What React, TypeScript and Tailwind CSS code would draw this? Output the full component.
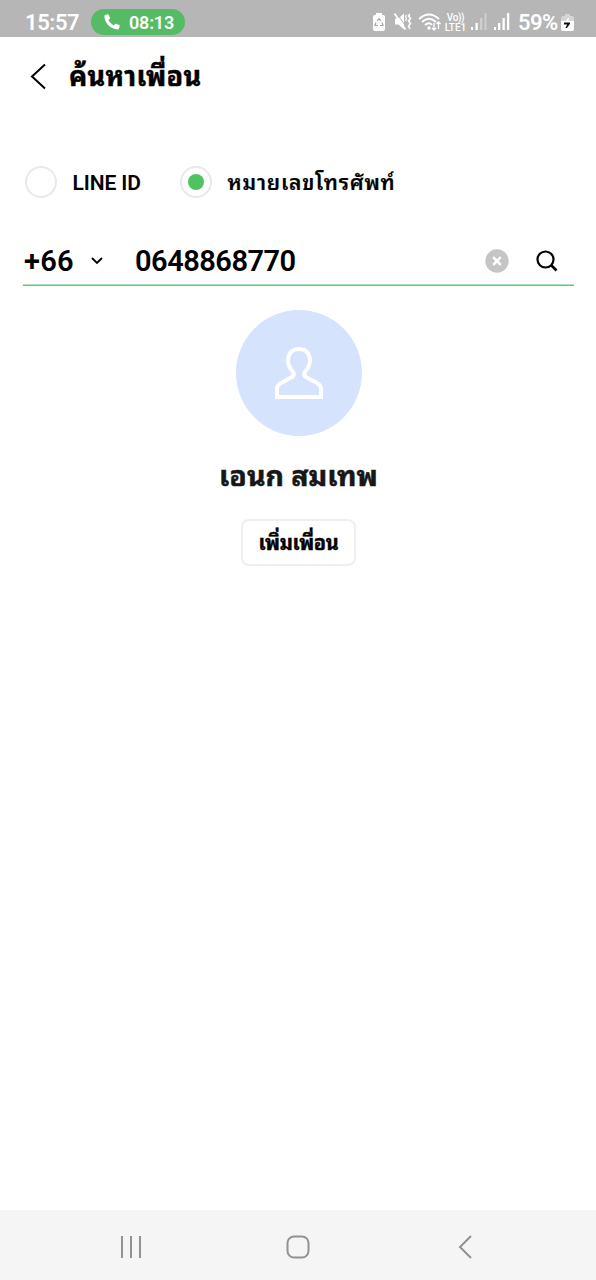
import type { ReactNode } from 'react';

function StatusBar() {
  return (
    <header className="flex h-[37px] items-center bg-[#b6b6b6] pt-[7px] text-white">
      <span className="ml-[25px] w-[54px] whitespace-nowrap pt-px text-[22px] leading-[30px] font-semibold tracking-[-0.4px]">15:57</span>
      <div className="ml-3 flex h-[26px] w-[94px] items-center rounded-full bg-[#55bb64]">
        <svg className="ml-[13px] h-4 w-4" viewBox="0 0 16 16" fill="currentColor">
          <path d="M1.200 1 3.600.200c.500-.100.900.100 1.100.600l1.200 3c.200.400.100.800-.200 1.100L4.400 6.100c1 2.200 3 4.200 5.500 5.300l1.200-1.400c.300-.300.700-.400 1.100-.200l3 1.300c.500.200.700.600.500 1.100l-.700 2.400c-.100.500-.500.800-1 .800C6.500 15.400.400 9 .400 2.100c0-.500.300-1 .800-1.100Z" />
        </svg>
        <span className="ml-[9px] whitespace-nowrap pt-0.5 text-[18px] leading-6 font-semibold tracking-[-0.2px]">08:13</span>
      </div>
      <StatusIcons />
      <span className="ml-2 w-[40px] whitespace-nowrap pt-px text-[22px] leading-[30px] font-semibold tracking-[-0.6px]">59%</span>
      <svg className="ml-[3px] h-5 w-[13px]" viewBox="0 0 13 20">
        <path d="M4 2h5v2h2q2 0 2 2v3H0V6q0-2 2-2h2Z" fill="#d5d5d5" />
        <path d="M0 9h13v8q0 2-2 2H2q-2 0-2-2Z" fill="#fff" />
        <path d="M7.500 5.500 4 10h4Z" fill="#fff" />
        <path d="M3 10.500h6v1.300L6 16H4.500l1.600-3.500H3Z" fill="#111" />
      </svg>
    </header>
  );
}

function StatusIcons() {
  return (
    <div className="ml-[187px] flex h-[26px] items-center">
      <svg className="h-[26px] w-[69px]" viewBox="0 0 69 26" fill="none" stroke="#fff">
        <path d="M4 4h6v2h1q2 0 2 2v12q0 2-2 2H3q-2 0-2-2V8q0-2 2-2h1Z" fill="#fff" stroke="none" />
        <path d="m5 12 2-2.500L9 12M10 13.500l1 3H8M6 16.500H3l1-3" stroke="#a5a5a5" strokeWidth="1.200" />
        <path d="M23 9.500h3.500l5.500-5v16l-5.500-5H23Z" fill="#fff" stroke="none" />
        <path d="m24.500 4 10.500 15" stroke="#b6b6b6" strokeWidth="1" />
        <path d="m22.500 4.500 11 16" strokeWidth="2" />
        <path d="M38 5 36.500 7l2 2.500-2 2.500 2 2.500-2 2.500 1.500 3" strokeWidth="1.600" />
        <path d="m34.500 6-1 1.500 1 2-1 2.500" strokeWidth="1.200" />
        <path d="M47 10q10-9 20 0M50 13q7-6.500 14 0M53 16q4-3.500 7 0" strokeWidth="1.800" />
        <circle cx="57" cy="19" r="1.700" fill="#fff" stroke="none" />
        <path d="M62 14v7m-2-2 2 2 2-2M66.500 20v-7m-2 2 2-2 2 2" strokeWidth="1.300" />
      </svg>
      <span className="ml-[3px] flex w-[23px] flex-col items-center whitespace-nowrap font-medium">
        <span className="text-[10px] leading-[11px] tracking-[-0.4px]">Vo))</span>
        <span className="text-[10px] leading-[10px]">LTE1</span>
      </span>
      <svg className="ml-[4px] h-[26px] w-[39px]" viewBox="0 0 39 26" fill="#fff">
        <path d="M0 18h2v3H0zM4.500 14h2.300v7H4.500z" />
        <path d="M9 9h2.300v12H9zM13.500 4h2v17h-2z" opacity=".35" />
        <path d="M23 18h2v3h-2zM27 14h2.300v7H27zM31.500 9h2.300v12h-2.300zM36 4h2.300v17H36z" />
      </svg>
    </div>
  );
}

interface RadioProps {
  checked?: boolean;
  children: ReactNode;
}

function Radio({ checked = false, children }: RadioProps) {
  return (
    <button className="flex items-center gap-4" role="radio" aria-checked={checked}>
      <span className="flex h-8 w-8 items-center justify-center rounded-full border-2 border-[#e9e9e9]">
        {checked && <span className="h-4 w-4 rounded-full bg-[#4dc460]" />}
      </span>
      {children}
    </button>
  );
}

function SearchField() {
  return (
    <div className="ml-[23px] mt-[37px] w-[551px]">
      <div className="flex h-[49px] items-center pt-0.5">
        <span className="w-[51px] whitespace-nowrap pl-px text-[29px] leading-9 font-semibold tracking-[0.3px]">+66</span>
        <svg className="ml-[17px] h-3 w-3" viewBox="0 0 12 12" fill="none" stroke="black" strokeWidth="1.800">
          <path d="m1 3 5 5 5-5" />
        </svg>
        <span className="ml-8 w-[161px] whitespace-nowrap text-[29px] leading-9 font-semibold tracking-[-0.5px]">0648868770</span>
        <svg className="ml-[189px] h-6 w-6" viewBox="0 0 24 24">
          <circle cx="12" cy="12" r="11.700" fill="#c5c5c5" />
          <path d="m8.200 8.200 7.600 7.600m0-7.600-7.600 7.600" stroke="white" strokeWidth="2.500" />
        </svg>
        <svg className="ml-[27px] h-[22px] w-[22px]" viewBox="0 0 22 22" fill="none" stroke="black" strokeWidth="2.200">
          <circle cx="9.500" cy="9.500" r="8" />
          <path d="m15 15 5.500 5.500" strokeWidth="2.600" />
        </svg>
      </div>
      <div className="h-px bg-[#a9e8b2]" />
      <div className="h-px bg-[#58cc68]" />
    </div>
  );
}

function Profile() {
  return (
    <section className="flex flex-col items-center pl-px pt-6">
      <div className="flex h-[126px] w-[126px] items-center justify-center rounded-full bg-[#d5e3fd]">
        <svg className="h-[52px] w-12" viewBox="0 0 48 52" fill="none" stroke="white" strokeWidth="4">
          <path d="M2 50v-8q0-4 4-6l11-6q3-2 1-5-5-6-5-12 1-11 11-11t11 11q0 6-5 12-2 3 1 5l11 6q4 2 4 6v8Z" />
        </svg>
      </div>
      <h2 className="mt-[21px] h-10 whitespace-nowrap text-[28.5px] leading-10 font-bold text-[#171717] [-webkit-text-stroke:0.500px]">เอนก สมเทพ</h2>
      <button className="mt-[22px] flex h-[47px] w-[115px] items-center justify-center rounded-lg border-2 border-[#efefef] text-[20px] leading-7 font-bold tracking-[-0.3px] whitespace-nowrap [-webkit-text-stroke:0.400px]">
        เพิ่มเพื่อน
      </button>
    </section>
  );
}

function NavBar() {
  return (
    <nav className="mt-auto flex h-[70px] items-center bg-[#f5f5f5] pt-1 text-[#929292]">
      <svg className="ml-[120px] h-6 w-[22px]" viewBox="0 0 22 24" fill="none" stroke="currentColor" strokeWidth="2">
        <path d="M2 1v22M11 1v22M20 1v22" />
      </svg>
      <svg className="ml-36 h-6 w-6" viewBox="0 0 24 24" fill="none" stroke="currentColor" strokeWidth="2">
        <rect x="1.500" y="1.500" width="21" height="21" rx="6.500" />
      </svg>
      <svg className="ml-[148px] h-6 w-[14px]" viewBox="0 0 14 24" fill="none" stroke="currentColor" strokeWidth="2">
        <path d="M13 1 2 12l11 11" />
      </svg>
    </nav>
  );
}

export default function App() {
  return (
    <main className="flex h-[1280px] w-[596px] flex-col overflow-hidden bg-white font-[Roboto,'Noto_Sans_Thai_Looped','Noto_Looped_Thai','Droid_Sans_Thai',Loma,Waree,Garuda,'Noto_Sans_Thai','Noto_Sans',sans-serif] text-black">
      <StatusBar />
      <div className="flex h-[79px] items-center">
        <svg className="ml-[30px] h-[28px] w-4" viewBox="0 0 16 28" fill="none" stroke="black" strokeWidth="2">
          <path d="M15 1.500 2 13.500l13 12" />
        </svg>
        <h1 className="ml-[23px] whitespace-nowrap pt-px text-[27px] leading-10 font-bold tracking-[0.3px] [-webkit-text-stroke:0.500px]">ค้นหาเพื่อน</h1>
      </div>
      <div className="mt-[50px] flex h-8 items-center pl-[24.5px]" role="radiogroup">
        <Radio>
          <span className="w-[69px] whitespace-nowrap pt-px text-left text-[21px] leading-8 font-semibold tracking-[-0.1px]">LINE ID</span>
        </Radio>
        <div className="ml-[38px]">
          <Radio checked>
            <span className="whitespace-nowrap pt-px text-[21px] leading-8 font-semibold tracking-[0.8px] [-webkit-text-stroke:0.200px]">หมายเลขโทรศัพท์</span>
          </Radio>
        </div>
      </div>
      <SearchField />
      <Profile />
      <NavBar />
    </main>
  );
}
